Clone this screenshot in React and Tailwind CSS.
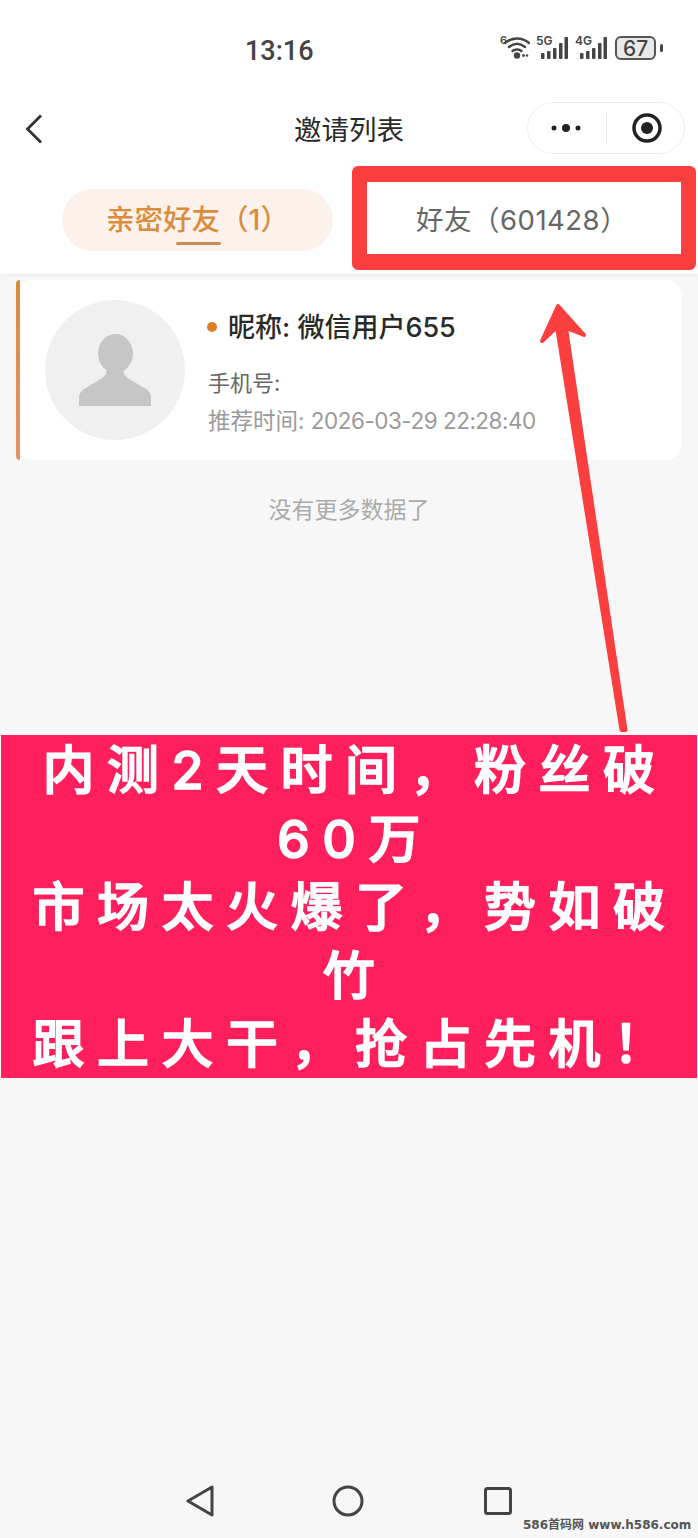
function StatusIcons() {
  return (
    <div className="flex items-center text-[#444] font-semibold">
      <span className="text-[11px] leading-none -mt-[15px]">6</span>
      <svg width="26" height="24" viewBox="0 0 26 24" fill="none" stroke="#444" strokeLinecap="round" className="-ml-[3px]">
        <path d="M1 7C8 1 18 1 25 7" strokeWidth="2.4" />
        <path d="M5 11C10 7 16 7 21 11" strokeWidth="2.4" />
        <path d="M8.500 15C11 13 15 13 17.500 15" strokeWidth="2.400" />
        <circle cx="13" cy="19.500" r="3.200" fill="#444" stroke="none" />
        <circle cx="19.500" cy="19.500" r="1.400" fill="#444" stroke="none" />
        <circle cx="23" cy="19.500" r="1.200" fill="#444" stroke="none" />
      </svg>
      <Signal label="5G" className="ml-[6px]" />
      <Signal label="4G" className="ml-[7px]" />
      <div className="ml-[8px] w-[41px] h-[24px] rounded-[6px] border-2 border-[#555] bg-[#e9e9e9] flex items-center justify-center text-[21px] leading-none font-medium text-[#444]">67</div>
      <div className="ml-[4px] w-[3px] h-[8px] rounded-full bg-[#444]" />
    </div>
  );
}

function Signal({ label, className }) {
  return (
    <div className={`relative w-[32px] h-[24px] ${className}`}>
      <span className="absolute left-0 top-[-1px] text-[12px] leading-[12px] font-semibold">{label}</span>
      <svg width="32" height="24" viewBox="0 0 32 24" fill="#444" className="absolute left-0 top-0">
        <rect x="5" y="17" width="3.500" height="6" rx="1" />
        <rect x="11" y="15" width="3.500" height="8" rx="1" />
        <rect x="17" y="12" width="3.500" height="11" rx="1" />
        <rect x="23" y="7" width="3.500" height="16" rx="1" />
        <rect x="28.500" y="1" width="3.500" height="22" rx="1" />
      </svg>
    </div>
  );
}

function Avatar() {
  return (
    <div className="w-[140px] h-[140px] rounded-full bg-[#f0f0f0] flex items-center justify-center shrink-0">
      <svg width="72" height="72" viewBox="0 0 72 72" fill="#c6c6c6">
        <ellipse cx="36.500" cy="19.500" rx="17.500" ry="19.500" />
        <path d="M28 33C28 40 26 43 20 46L5 55C2 57 0 60 0 63V72H72V63C72 60 70 57 67 55L52 46C46 43 44 40 44 33Z" />
      </svg>
    </div>
  );
}

export default function App() {
  return (
    <div className="relative w-[698px] h-[1538px] overflow-hidden bg-[#f7f7f7] flex flex-col font-['Inter','Noto_Sans_CJK_SC',sans-serif]">
      <div className="bg-white h-[274px] shrink-0 shadow-[0_1px_4px_rgba(0,0,0,0.06)]">
        <div className="h-[102px] flex items-start">
          <div className="w-[245px]" />
          <div className="mt-[34px] w-[68px] text-[27px] leading-[34px] font-medium text-[#444] whitespace-nowrap font-['Roboto',sans-serif]">13:16</div>
          <div className="ml-[187px] mt-[36px]">
            <StatusIcons />
          </div>
        </div>

        <div className="relative h-[52px] flex items-center justify-center">
          <svg width="18" height="30" viewBox="0 0 18 30" fill="none" stroke="#333" strokeWidth="2.800" className="absolute left-[25px] top-[12px]">
            <path d="M16 1.500L2.500 15L16 28.500" />
          </svg>
          <div className="text-[27.500px] leading-[52px] pt-[3px] text-[#2a2a2a]">邀请列表</div>
          <div className="absolute left-[527px] top-0 w-[158px] h-[52px] rounded-full border border-[#eee] bg-white flex items-center">
            <svg width="34" height="10" viewBox="0 0 34 10" fill="#222" className="ml-[21px]">
              <circle cx="5" cy="5" r="2.500" />
              <circle cx="17" cy="5" r="4" />
              <circle cx="29" cy="5" r="2.500" />
            </svg>
            <div className="ml-[23px] w-px h-[32px] bg-[#eee]" />
            <svg width="32" height="32" viewBox="0 0 32 32" className="ml-[24px]">
              <circle cx="16" cy="16" r="13" fill="none" stroke="#222" strokeWidth="3.500" />
              <circle cx="16" cy="16" r="6" fill="#222" />
            </svg>
          </div>
        </div>

        <div className="flex mt-[35px]">
          <div className="relative ml-[62px] w-[271px] h-[62px] rounded-full bg-[#fdf1ec] flex items-center justify-center font-medium text-[28.500px] text-[#d98d3c]">
            亲密好友（1）
            <div className="absolute left-[114px] top-[53px] w-[45px] h-[3px] rounded-full bg-[#c98d58]" />
          </div>
          <div className="flex-1 h-[62px] flex items-center pl-[83px] pt-[2px] text-[27.500px] tracking-[0.5px] text-[#666]">好友（601428）</div>
        </div>
      </div>

      <div className="ml-[16px] mt-[6px] w-[666px] h-[180px] rounded-[16px] bg-white flex shrink-0">
        <div className="w-[4px] rounded-l-full bg-gradient-to-b from-[#d98b3d] to-[#e8916b] shrink-0" />
        <div className="flex pl-[25px] pt-[20px]">
          <Avatar />
          <div className="ml-[23px]">
            <div className="flex items-center h-[40px] mt-[7px]">
              <div className="w-[10px] h-[10px] rounded-full bg-[#dc8027] ml-[-1px]" />
              <div className="ml-[11px] pt-[2px] text-[27px] font-medium text-[#2a2a2a] whitespace-nowrap">昵称: 微信用户655</div>
            </div>
            <div className="mt-[21px] text-[22px] leading-[30px] text-[#666]">手机号:</div>
            <div className="mt-[8px] text-[22.500px] leading-[30px] text-[#9a9a9a] whitespace-nowrap">
              推荐时间: <span className="tracking-[-0.5px]">2026-03-29 22:28:40</span>
            </div>
          </div>
        </div>
      </div>

      <div className="mt-[35px] text-center text-[23px] leading-[30px] text-[#ababab] shrink-0">没有更多数据了</div>

      <div className="mt-[210px] ml-px w-[696px] h-[343px] bg-[#fe1f5c] text-white text-center font-medium text-[52px] leading-[68.500px] tracking-[12.500px] pl-[12px] pt-[2px] whitespace-nowrap [-webkit-text-stroke:1.5px_#fff] shrink-0">
        内测2天时间，粉丝破
        <br />
        60万
        <br />
        市场太火爆了，势如破
        <br />
        竹
        <br />
        跟上大干，抢占先机！
      </div>

      <div className="mt-auto mb-[21px] flex items-center pl-[186px]">
        <svg width="28" height="32" viewBox="0 0 28 32" fill="none" stroke="#444" strokeWidth="3" strokeLinejoin="round">
          <path d="M26 2V30L2 16Z" />
        </svg>
        <svg width="32" height="32" viewBox="0 0 32 32" fill="none" stroke="#444" strokeWidth="3" className="ml-[118px]">
          <circle cx="16" cy="16" r="14" />
        </svg>
        <svg width="28" height="28" viewBox="0 0 28 28" fill="none" stroke="#444" strokeWidth="3" className="ml-[120px]">
          <rect x="1.500" y="1.500" width="25" height="25" rx="2" />
        </svg>
      </div>

      {/* annotations over the screenshot */}
      <div className="absolute left-[352px] top-[166px] w-[344px] h-[104px] rounded-[6px] border-x-[15px] border-y-[16px] border-[#fb3f3f]" />
      <svg width="100" height="440" viewBox="0 0 100 440" className="absolute left-[535px] top-[300px]">
        <path d="M23 6L49 35L31 28L90.500 430L86.500 430L22 27L7 41Z" fill="#fb3f3f" stroke="#fb3f3f" strokeWidth="4" strokeLinejoin="round" />
      </svg>
      <div className="absolute left-[523px] top-[1516px] text-[12px] leading-[18px] font-bold text-[#555] whitespace-nowrap font-['DejaVu_Sans','Noto_Sans_CJK_SC',sans-serif]">586首码网 www.h586.com</div>
    </div>
  );
}
